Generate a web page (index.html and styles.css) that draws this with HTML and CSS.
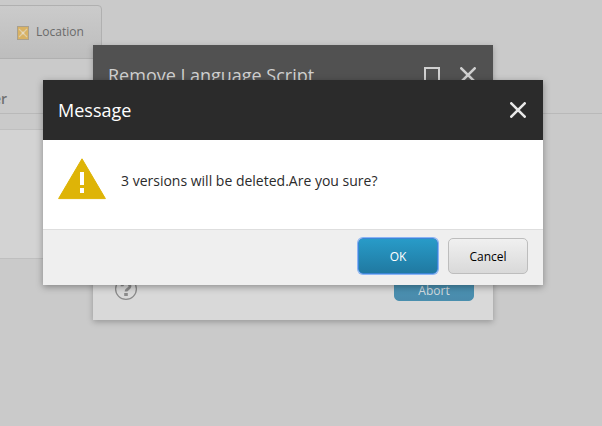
FILE: index.html
```html
<!DOCTYPE html>
<html lang="en">
<head>
<meta charset="utf-8">
<title>Message</title>
<link rel="stylesheet" href="styles.css">
</head>
<body>
<main class="page">
  <div class="tab">
    <svg class="tab-icon" width="12" height="14" viewBox="0 0 12 14"><rect x=".5" y=".5" width="11" height="13" fill="#d9b263" stroke="#aaa08c"/><path d="M2 3l8 8M10 3l-8 8" stroke="#dfcda6" stroke-width="1.1"/><rect x="4.8" y="5.8" width="2.4" height="2.4" fill="#e6d9bd"/></svg>
    <span>Location</span>
  </div>
  <div class="section-title"><span>er</span></div>
  <div class="panel"></div>
</main>

<section class="dialog dialog-back">
  <header class="dialog-header">
    <h2>Remove Language Script</h2>
    <svg class="maximize" width="16" height="16" viewBox="0 0 16 16"><rect x="1" y="1" width="14" height="14" fill="none" stroke="currentColor" stroke-width="2"/></svg>
    <svg width="16" height="16" viewBox="0 0 16 16"><path d="M1.3 1.3l13.4 13.4M14.7 1.3L1.3 14.7" stroke="currentColor" stroke-width="2.6" stroke-linecap="round"/></svg>
  </header>
  <div class="dialog-body"></div>
  <footer class="dialog-footer">
    <svg class="help" width="24" height="24" viewBox="0 0 24 24"><circle cx="12" cy="12" r="10.4" fill="none" stroke="#8b8b8b" stroke-width="1.3"/><path d="M8 9.2C8 5.2 16 5.2 16 9.2c0 2.7-4 2.9-4 5.4" fill="none" stroke="#8b8b8b" stroke-width="2.8"/><rect x="10.2" y="16" width="3.6" height="3" fill="#8b8b8b"/></svg>
    <button class="button primary">Abort</button>
  </footer>
</section>

<section class="dialog dialog-front">
  <header class="dialog-header">
    <h2>Message</h2>
    <svg width="16" height="16" viewBox="0 0 16 16"><path d="M1.3 1.3l13.4 13.4M14.7 1.3L1.3 14.7" stroke="currentColor" stroke-width="2.6" stroke-linecap="round"/></svg>
  </header>
  <div class="dialog-body">
    <svg width="48" height="42" viewBox="0 0 48 42"><path d="M24 .8L47.4 40.6H.6z" fill="#deb407" stroke="#deb407" stroke-width="1" stroke-linejoin="round"/><path d="M22 14h4v13h-4zM22 30h4v5h-4z" fill="#fff"/></svg>
    <p>3 versions will be deleted.Are you sure?</p>
  </div>
  <footer class="dialog-footer">
    <button class="button primary focused">OK</button>
    <button class="button">Cancel</button>
  </footer>
</section>
</body>
</html>
```
FILE: styles.css
```css
* { box-sizing: border-box; }
body {
  margin: 0;
  width: 602px;
  height: 426px;
  overflow: hidden;
  background: #cacaca;
  font-family: "Open Sans", "Noto Sans", sans-serif;
}
svg { display: block; flex: none; }
.page { padding-top: 5px; }
.tab {
  display: flex;
  align-items: center;
  gap: 7px;
  width: 112px;
  height: 54px;
  margin-left: -10px;
  padding: 0 0 1px 26px;
  border: 1px solid #b0b0b0;
  border-radius: 4px;
  background: linear-gradient(#cbcbcb, #bdbdbd);
  color: #6a6a6a;
  font-size: 12px;
}
.tab-icon { margin-top: 2px; }
.section-title {
  height: 55px;
  padding-top: 29px;
  border-bottom: 1px solid #b9b9b9;
  color: #707070;
  font-size: 14px;
  font-weight: 600;
  line-height: 22px;
}
.section-title span { margin-left: -7px; }
.panel {
  width: 93px;
  height: 130px;
  margin-top: 15px;
  background: #d3d3d3;
  border: solid #bfbfbf;
  border-width: 1px 0;
}
.dialog {
  position: absolute;
  display: flex;
  flex-direction: column;
}
.dialog-header {
  display: flex;
  align-items: center;
  height: 60px;
  padding: 0 17px 0 15px;
}
.dialog-header h2 {
  flex: 1;
  margin: 0;
  font-size: 18px;
  font-weight: 400;
}
.dialog-body { flex: 1; }
.dialog-footer {
  display: flex;
  align-items: center;
  height: 56px;
}
.dialog-back {
  left: 93px;
  top: 45px;
  width: 400px;
  height: 275px;
  background: #d9d9d9;
  box-shadow: 0 2px 6px rgba(0, 0, 0, .25);
}
.dialog-back .dialog-header { background: #515151; color: #d0d0d0; }
.maximize { margin-right: 20px; }
.dialog-back .dialog-footer {
  align-items: flex-end;
  justify-content: space-between;
  padding: 0 19px 19px 21px;
}
.dialog-front {
  left: 43px;
  top: 80px;
  width: 500px;
  height: 205px;
  background: #fff;
  box-shadow: 0 2px 7px rgba(0, 0, 0, .35);
}
.dialog-front .dialog-header { background: #2b2b2b; color: #fff; }
.dialog-front .dialog-header svg { color: #e8e8e8; }
.dialog-front .dialog-body {
  display: flex;
  align-items: flex-start;
  gap: 15px;
  padding: 18px 15px;
}
.dialog-front p {
  margin: 13px 0 0;
  color: #2b2b2b;
  font-size: 14px;
  line-height: 20px;
}
.dialog-front .dialog-footer {
  justify-content: flex-end;
  gap: 10px;
  padding: 0 15px 3px;
  border-top: 1px solid #dedede;
  background: #efefef;
}
.button {
  width: 80px;
  height: 36px;
  padding: 0;
  border: 1px solid #bdbdbd;
  border-radius: 5px;
  background: linear-gradient(#f0f0f0, #d9d9d9);
  color: #000;
  font: 12px "Open Sans", "Noto Sans", sans-serif;
}
.button.primary {
  border-color: #2182a9;
  background: linear-gradient(#289bc8, #2079a1);
  color: #fff;
}
.dialog-back .button.primary {
  height: 22px;
  border-color: #4a8fae;
  background: linear-gradient(#4a95b5, #4a8bac);
  color: #d5dde0;
}
.button.focused { border-color: #3c86d6; box-shadow: 0 0 0 1px #8ab4f4; }
```
